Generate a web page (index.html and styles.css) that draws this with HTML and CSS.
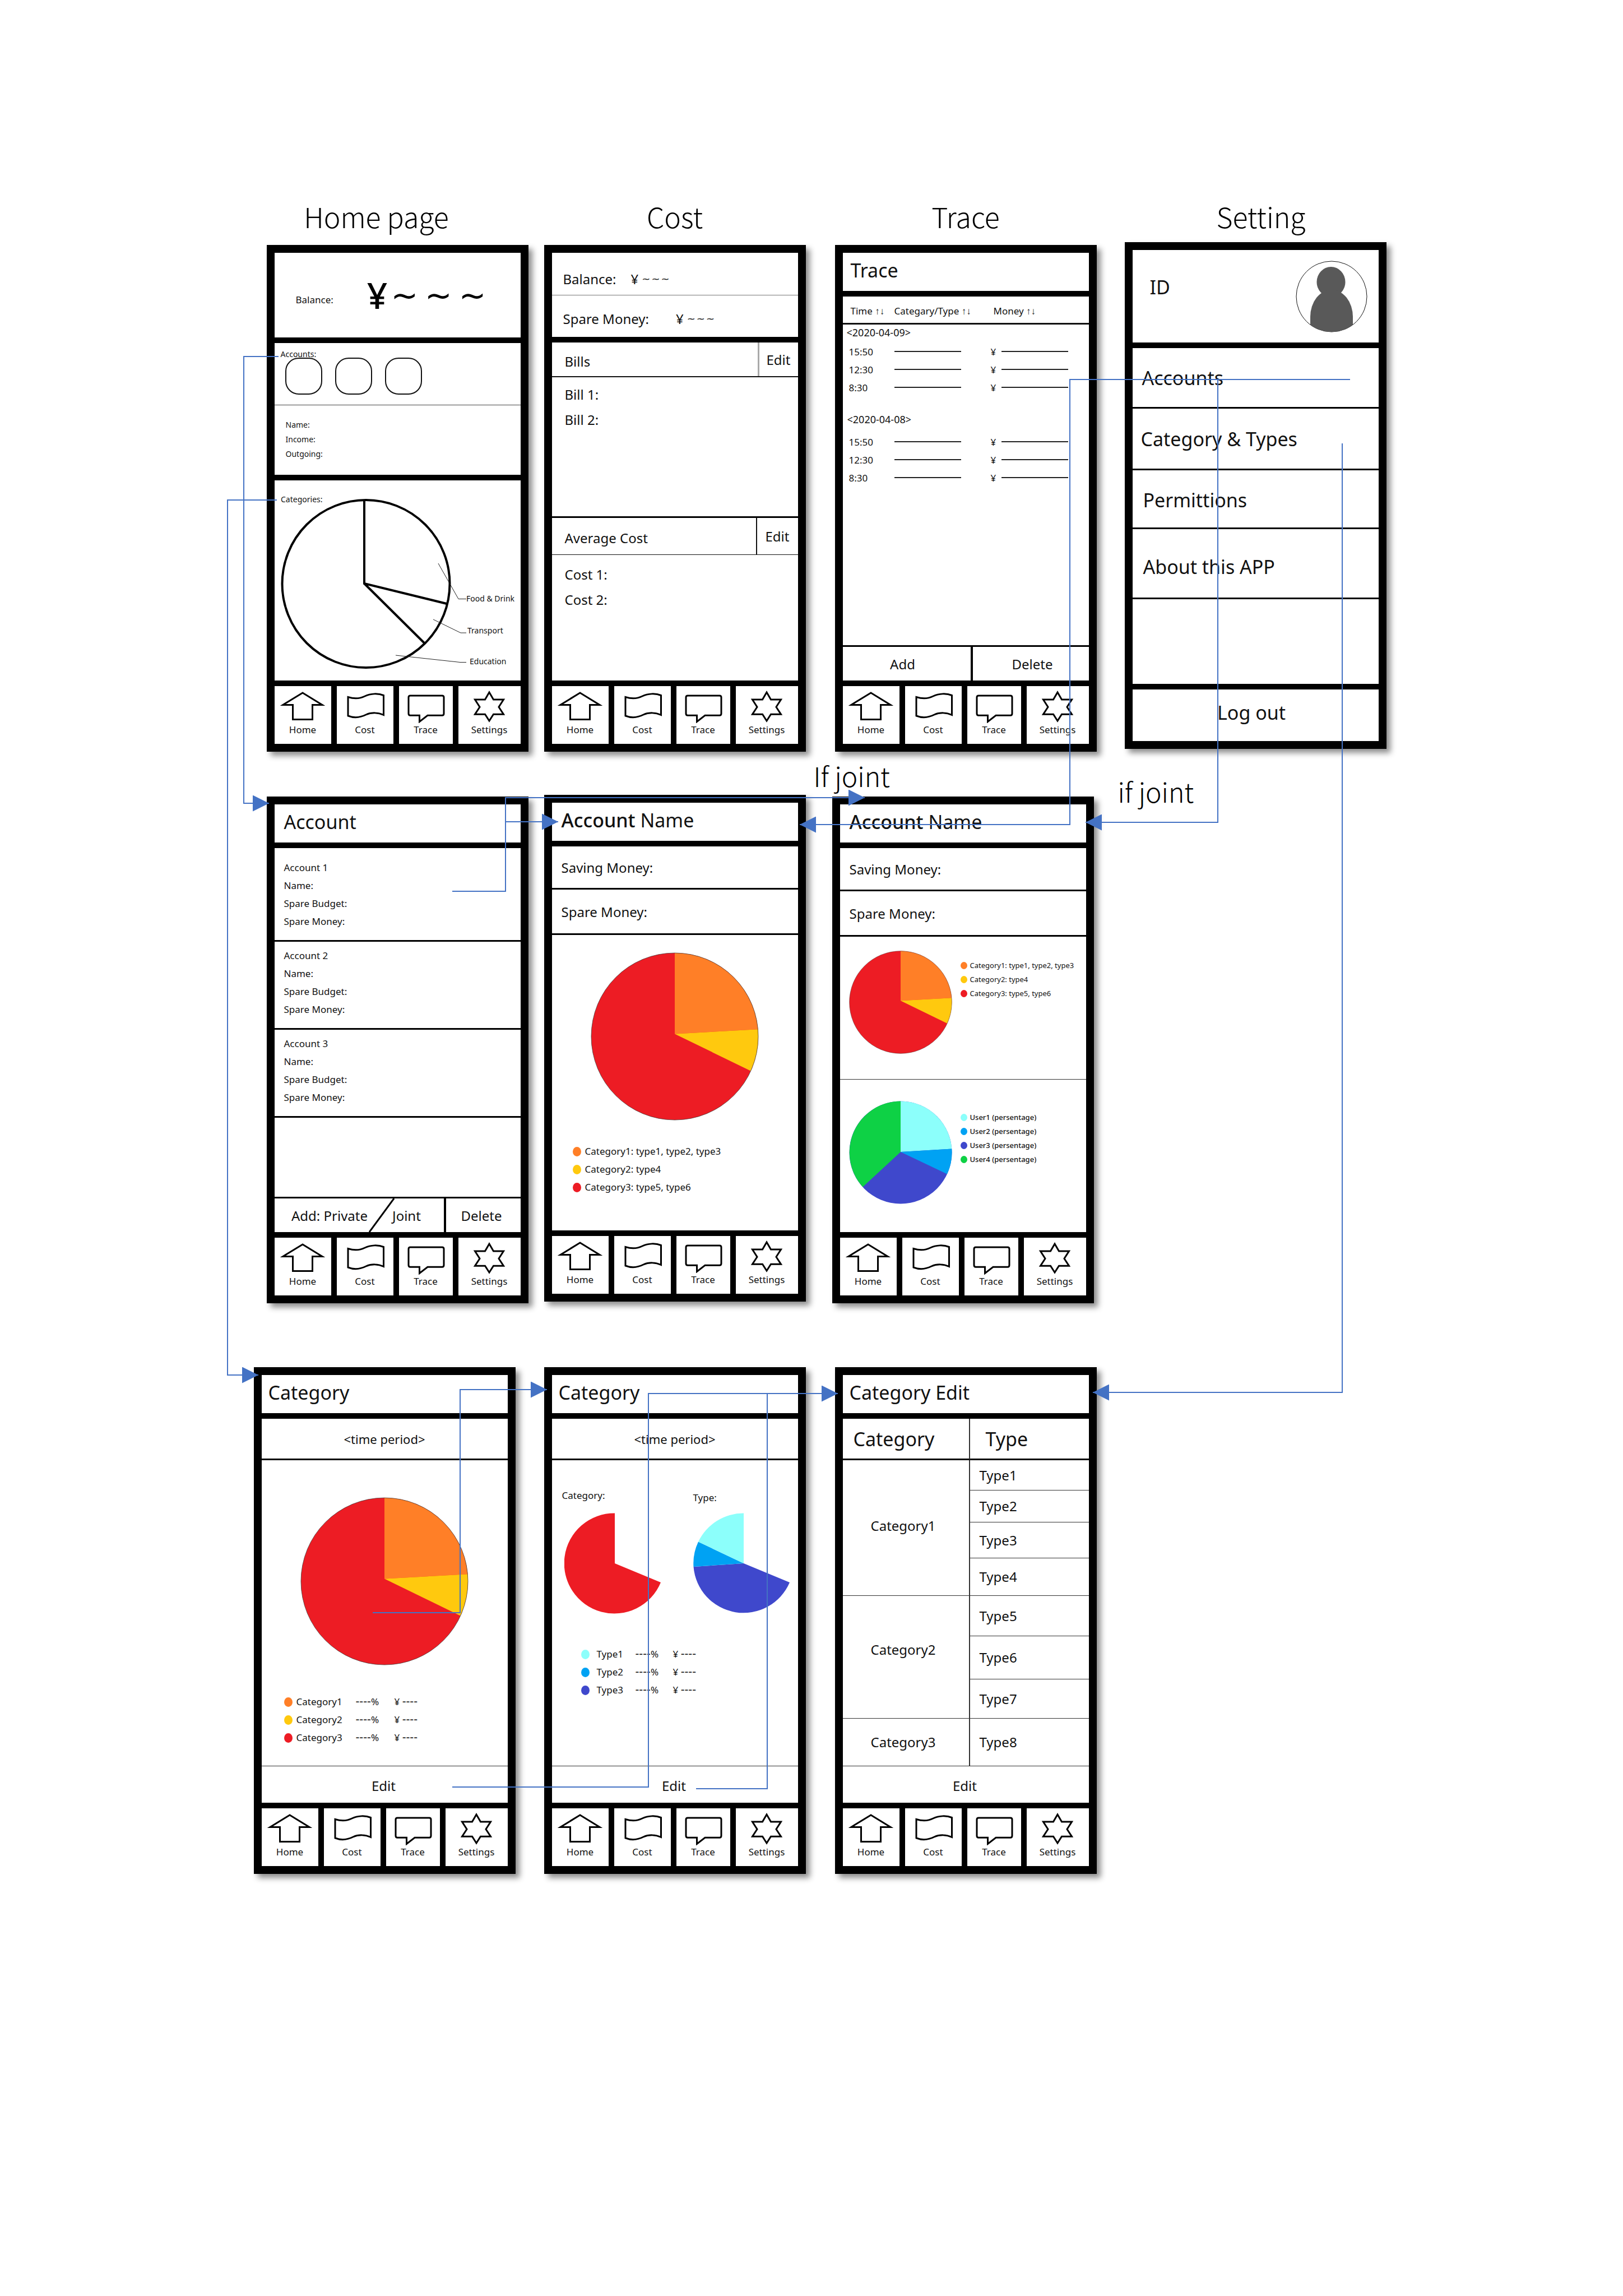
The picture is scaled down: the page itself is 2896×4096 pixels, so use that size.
FILE: index.html
```html
<!DOCTYPE html>
<html lang="en">
<head>
<meta charset="utf-8">
<meta name="viewport" content="width=device-width, initial-scale=1">
<title>Accounting app screen flow</title>
<link rel="stylesheet" href="styles.css">
</head>
<body>
<svg class="defs" width="0" height="0" aria-hidden="true">
  <symbol id="i-home" viewBox="0 0 96 66"><path d="M48 12 83 33.4H65.5V59.5H30.5V33.4H13Z"/></symbol>
  <symbol id="i-cost" viewBox="0 0 96 66"><path d="M18 19.5C26 22 38 23 48 18C58 13 72 12.500 81.500 16.500V51.500C72 47 60 46.500 50 51C38 57 27 56.500 18 53Z"/></symbol>
  <symbol id="i-trace" viewBox="0 0 96 66"><path d="M20 17H77Q80 17 80 20V49Q80 52.300 77 52.300H51L36.500 63.500V52.300H20Q17 52.300 17 49V20Q17 17 20 17Z"/></symbol>
  <symbol id="i-settings" viewBox="0 0 96 66"><path d="M48 11 55.500 24H73.500L65 37.200 73.500 50.300H55.500L48 62 40.500 50.300H22.500L31 37.200 22.500 24H40.500Z"/></symbol>
  <symbol id="category-pie" viewBox="-150 -150 300 300">
    <circle r="149" fill="#ed1c24"/>
    <path fill="#ff7f27" d="M0-4.500V-149A149 149 0 0 1 148.500-12.800Z"/>
    <path fill="#ffc90e" d="M0-4.500 148.500-12.800A149 149 0 0 1 135.500 61.500Z"/>
    <circle r="149" fill="none" stroke="#333" stroke-opacity=".7"/>
  </symbol>
</svg>

<main class="board">

  <div class="row row-top">
    <section class="column">
      <h2 class="heading heading-home">Home page</h2>
      <article class="phone">
        <div class="balance">
          <span class="balance-label">Balance:</span>
          <span class="balance-sign">¥</span>
          <span class="tildes tildes-large"><span>~</span><span>~</span><span>~</span></span>
        </div>
        <div class="home-accounts">
          <div class="tiny">Accounts:</div>
          <div class="account-tiles">
            <button type="button" class="tile" aria-label="Account 1"></button>
            <button type="button" class="tile" aria-label="Account 2"></button>
            <button type="button" class="tile" aria-label="Account 3"></button>
          </div>
        </div>
        <div class="home-details">
          <div>Name:</div>
          <div>Income:</div>
          <div>Outgoing:</div>
        </div>
        <div class="fill">
          <svg class="home-chart" viewBox="489 857 439 357">
            <g fill="none" stroke="#000" stroke-width="4">
              <circle cx="652" cy="1041.500" r="149.500"/>
              <path d="M649 892V1041L796 1077M649 1041 756 1147"/>
            </g>
            <path fill="none" stroke="#222" d="M781 1005 817 1068.500H831M772 1105 821 1129H831M705 1169 820 1181.500H831"/>
            <text x="500" y="896">Categories:</text>
            <text x="831" y="1073">Food &amp; Drink</text>
            <text x="833" y="1130">Transport</text>
            <text x="837" y="1185">Education</text>
          </svg>
        </div>
        <nav class="tabs">
          <a href="#home"><svg><use href="#i-home"/></svg>Home</a>
          <a href="#cost"><svg><use href="#i-cost"/></svg>Cost</a>
          <a href="#trace"><svg><use href="#i-trace"/></svg>Trace</a>
          <a href="#settings"><svg><use href="#i-settings"/></svg>Settings</a>
        </nav>
      </article>
    </section>

    <section class="column">
      <h2 class="heading">Cost</h2>
      <article class="phone">
        <div class="money-row money-row-first">Balance:<span class="amount amount-near">¥<span class="tildes"><span>~</span><span>~</span><span>~</span></span></span></div>
        <div class="money-row money-row-second">Spare Money:<span class="amount amount-far">¥<span class="tildes"><span>~</span><span>~</span><span>~</span></span></span></div>
        <div class="list-head bills-head"><h3>Bills</h3><button type="button">Edit</button></div>
        <div class="list bills"><div>Bill 1:</div><div>Bill 2:</div></div>
        <div class="list-head costs-head"><h3>Average Cost</h3><button type="button">Edit</button></div>
        <div class="list costs fill"><div>Cost 1:</div><div>Cost 2:</div></div>
        <nav class="tabs">
          <a href="#home"><svg><use href="#i-home"/></svg>Home</a>
          <a href="#cost"><svg><use href="#i-cost"/></svg>Cost</a>
          <a href="#trace"><svg><use href="#i-trace"/></svg>Trace</a>
          <a href="#settings"><svg><use href="#i-settings"/></svg>Settings</a>
        </nav>
      </article>
    </section>

    <section class="column">
      <h2 class="heading">Trace</h2>
      <article class="phone">
        <h3 class="titlebar">Trace</h3>
        <div class="fill">
          <table class="trace">
            <thead>
              <tr><th class="c-time">Time <span class="sort">↑↓</span></th><th class="c-type">Categary/Type <span class="sort">↑↓</span></th><th class="c-money">Money <span class="sort">↑↓</span></th></tr>
            </thead>
            <tbody>
              <tr><th colspan="3" class="date">&lt;2020-04-09&gt;</th></tr>
              <tr><td>15:50</td><td><i class="blank"></i></td><td>¥<i class="blank"></i></td></tr>
              <tr><td>12:30</td><td><i class="blank"></i></td><td>¥<i class="blank"></i></td></tr>
              <tr><td>8:30</td><td><i class="blank"></i></td><td>¥<i class="blank"></i></td></tr>
            </tbody>
            <tbody>
              <tr><th colspan="3" class="date date-later">&lt;2020-04-08&gt;</th></tr>
              <tr><td>15:50</td><td><i class="blank"></i></td><td>¥<i class="blank"></i></td></tr>
              <tr><td>12:30</td><td><i class="blank"></i></td><td>¥<i class="blank"></i></td></tr>
              <tr><td>8:30</td><td><i class="blank"></i></td><td>¥<i class="blank"></i></td></tr>
            </tbody>
          </table>
        </div>
        <div class="actions trace-actions"><button type="button">Add</button><button type="button">Delete</button></div>
        <nav class="tabs">
          <a href="#home"><svg><use href="#i-home"/></svg>Home</a>
          <a href="#cost"><svg><use href="#i-cost"/></svg>Cost</a>
          <a href="#trace"><svg><use href="#i-trace"/></svg>Trace</a>
          <a href="#settings"><svg><use href="#i-settings"/></svg>Settings</a>
        </nav>
      </article>
    </section>

    <section class="column">
      <h2 class="heading heading-setting">Setting</h2>
      <article class="phone">
        <div class="profile">
          <span>ID</span>
          <svg class="avatar" viewBox="0 0 128 128" aria-hidden="true">
            <clipPath id="avatar-clip"><circle cx="64" cy="64" r="63"/></clipPath>
            <circle cx="64" cy="64" r="63" fill="#fff" stroke="#111"/>
            <g fill="#595959" clip-path="url(#avatar-clip)"><ellipse cx="63" cy="38" rx="25.500" ry="27"/><path d="M26 128V100A38 48 0 0 1 102 100V128Z"/></g>
          </svg>
        </div>
        <a class="setting setting-accounts" href="#accounts">Accounts</a>
        <a class="setting setting-category" href="#category">Category &amp; Types</a>
        <a class="setting setting-permissions" href="#permissions">Permittions</a>
        <a class="setting setting-about" href="#about">About this APP</a>
        <div class="fill"></div>
        <button type="button" class="logout">Log out</button>
      </article>
    </section>
  </div>

  <div class="row row-middle">
    <article class="phone phone-lower" id="accounts">
      <h3 class="titlebar titlebar-account">Account</h3>
      <div class="account account-first"><div>Account 1</div><div>Name:</div><div>Spare Budget:</div><div>Spare Money:</div></div>
      <div class="account"><div>Account 2</div><div>Name:</div><div>Spare Budget:</div><div>Spare Money:</div></div>
      <div class="account"><div>Account 3</div><div>Name:</div><div>Spare Budget:</div><div>Spare Money:</div></div>
      <div class="fill"></div>
      <div class="actions account-actions">
        <button type="button" class="add-private">Add: Private</button>
        <button type="button" class="add-joint">Joint</button>
        <button type="button" class="remove">Delete</button>
        <svg class="slash" viewBox="0 0 46 60" aria-hidden="true"><path d="M1 60 45 0" stroke="#000" stroke-width="3"/></svg>
      </div>
      <nav class="tabs">
        <a href="#home"><svg><use href="#i-home"/></svg>Home</a>
        <a href="#cost"><svg><use href="#i-cost"/></svg>Cost</a>
        <a href="#trace"><svg><use href="#i-trace"/></svg>Trace</a>
        <a href="#settings"><svg><use href="#i-settings"/></svg>Settings</a>
      </nav>
    </article>

    <article class="phone">
      <h3 class="titlebar titlebar-account"><strong>Account</strong>&nbsp;Name</h3>
      <div class="sum saving">Saving Money:</div>
      <div class="sum spare">Spare Money:</div>
      <div class="fill overview">
        <svg class="pie-large"><use href="#category-pie"/></svg>
        <ul class="legend">
          <li><i class="dot orange"></i>Category1: type1, type2, type3</li>
          <li><i class="dot yellow"></i>Category2: type4</li>
          <li><i class="dot red"></i>Category3: type5, type6</li>
        </ul>
      </div>
      <nav class="tabs">
        <a href="#home"><svg><use href="#i-home"/></svg>Home</a>
        <a href="#cost"><svg><use href="#i-cost"/></svg>Cost</a>
        <a href="#trace"><svg><use href="#i-trace"/></svg>Trace</a>
        <a href="#settings"><svg><use href="#i-settings"/></svg>Settings</a>
      </nav>
    </article>

    <article class="phone phone-lower">
      <h3 class="titlebar titlebar-account"><strong>Account</strong>&nbsp;Name</h3>
      <div class="sum saving">Saving Money:</div>
      <div class="sum spare">Spare Money:</div>
      <div class="split split-categories">
        <svg class="pie-small"><use href="#category-pie"/></svg>
        <ul class="legend legend-small">
          <li><i class="dot orange"></i>Category1: type1, type2, type3</li>
          <li><i class="dot yellow"></i>Category2: type4</li>
          <li><i class="dot red"></i>Category3: type5, type6</li>
        </ul>
      </div>
      <div class="split split-users fill">
        <svg class="pie-small" viewBox="-92 -92 184 184">
          <circle r="91.500" fill="#3f48cc"/>
          <path fill="#8cfffb" d="M0-1V-91.500A91.500 91.500 0 0 1 91.300-6.500Z"/>
          <path fill="#00a2f3" d="M0-1 91.300-6.500A91.500 91.500 0 0 1 83 38.500Z"/>
          <path fill="#0ed145" d="M0-1-67.500 61.500A91.500 91.500 0 0 1 0-91.500Z"/>
        </svg>
        <ul class="legend legend-small">
          <li><i class="dot cyan"></i>User1 (persentage)</li>
          <li><i class="dot blue"></i>User2 (persentage)</li>
          <li><i class="dot indigo"></i>User3 (persentage)</li>
          <li><i class="dot green"></i>User4 (persentage)</li>
        </ul>
      </div>
      <nav class="tabs">
        <a href="#home"><svg><use href="#i-home"/></svg>Home</a>
        <a href="#cost"><svg><use href="#i-cost"/></svg>Cost</a>
        <a href="#trace"><svg><use href="#i-trace"/></svg>Trace</a>
        <a href="#settings"><svg><use href="#i-settings"/></svg>Settings</a>
      </nav>
    </article>
  </div>

  <div class="row row-bottom">
    <article class="phone" id="category">
      <h3 class="titlebar titlebar-category">Category</h3>
      <div class="period">&lt;time period&gt;</div>
      <div class="fill category-overview">
        <svg class="pie-large"><use href="#category-pie"/></svg>
        <ul class="legend shares">
          <li><i class="dot orange"></i><span>Category1</span><span><b class="dashes">----</b>%</span><span>¥ <b class="dashes">----</b></span></li>
          <li><i class="dot yellow"></i><span>Category2</span><span><b class="dashes">----</b>%</span><span>¥ <b class="dashes">----</b></span></li>
          <li><i class="dot red"></i><span>Category3</span><span><b class="dashes">----</b>%</span><span>¥ <b class="dashes">----</b></span></li>
        </ul>
      </div>
      <button type="button" class="edit">Edit</button>
      <nav class="tabs">
        <a href="#home"><svg><use href="#i-home"/></svg>Home</a>
        <a href="#cost"><svg><use href="#i-cost"/></svg>Cost</a>
        <a href="#trace"><svg><use href="#i-trace"/></svg>Trace</a>
        <a href="#settings"><svg><use href="#i-settings"/></svg>Settings</a>
      </nav>
    </article>

    <article class="phone">
      <h3 class="titlebar titlebar-category">Category</h3>
      <div class="period">&lt;time period&gt;</div>
      <div class="fill type-overview">
        <div class="pair">
          <div class="chart">
            <div class="chart-label">Category:</div>
            <svg class="pie-part" viewBox="-90 -90 180 180"><path fill="#ed1c24" d="M0 0V-89.500A89.500 89.500 0 1 0 82 34Z"/></svg>
          </div>
          <div class="chart">
            <div class="chart-label chart-label-low">Type:</div>
            <svg class="pie-part" viewBox="-90 -90 180 180">
              <path fill="#3f48cc" d="M0 0-89.500 6A89.500 89.500 0 0 0 82 34Z"/>
              <path fill="#00a2f3" d="M0 0-81-38.500A89.500 89.500 0 0 0-89.500 6Z"/>
              <path fill="#8cfffb" d="M0 0V-89.500A89.500 89.500 0 0 0-81-38.500Z"/>
            </svg>
          </div>
        </div>
        <ul class="legend shares shares-types">
          <li><i class="dot cyan"></i><span>Type1</span><span><b class="dashes">----</b>%</span><span>¥ <b class="dashes">----</b></span></li>
          <li><i class="dot blue"></i><span>Type2</span><span><b class="dashes">----</b>%</span><span>¥ <b class="dashes">----</b></span></li>
          <li><i class="dot indigo"></i><span>Type3</span><span><b class="dashes">----</b>%</span><span>¥ <b class="dashes">----</b></span></li>
        </ul>
      </div>
      <button type="button" class="edit">Edit</button>
      <nav class="tabs">
        <a href="#home"><svg><use href="#i-home"/></svg>Home</a>
        <a href="#cost"><svg><use href="#i-cost"/></svg>Cost</a>
        <a href="#trace"><svg><use href="#i-trace"/></svg>Trace</a>
        <a href="#settings"><svg><use href="#i-settings"/></svg>Settings</a>
      </nav>
    </article>

    <article class="phone">
      <h3 class="titlebar titlebar-category">Category Edit</h3>
      <table class="types fill">
        <thead><tr><th>Category</th><th>Type</th></tr></thead>
        <tbody>
          <tr class="h54"><td rowspan="4" class="group group-one">Category1</td><td>Type1</td></tr>
          <tr class="h57"><td>Type2</td></tr>
          <tr class="h64"><td>Type3</td></tr>
          <tr class="h67"><td>Type4</td></tr>
          <tr class="h72"><td rowspan="3" class="group group-two">Category2</td><td>Type5</td></tr>
          <tr class="h77"><td>Type6</td></tr>
          <tr class="h70"><td>Type7</td></tr>
          <tr class="h84"><td class="group">Category3</td><td>Type8</td></tr>
        </tbody>
      </table>
      <button type="button" class="edit">Edit</button>
      <nav class="tabs">
        <a href="#home"><svg><use href="#i-home"/></svg>Home</a>
        <a href="#cost"><svg><use href="#i-cost"/></svg>Cost</a>
        <a href="#trace"><svg><use href="#i-trace"/></svg>Trace</a>
        <a href="#settings"><svg><use href="#i-settings"/></svg>Settings</a>
      </nav>
    </article>
  </div>

  <!-- links between the screens -->
  <svg class="links" viewBox="405 349 2086 2994" aria-hidden="true">
    <defs>
      <marker id="arrow" markerUnits="userSpaceOnUse" markerWidth="29" markerHeight="29" refX="29" refY="14.500" orient="auto"><path d="M0 0 29 14.500 0 29Z" fill="#4472c4" stroke="none"/></marker>
    </defs>
    <path marker-end="url(#arrow)" d="M496 636H434V1433H479"/>
    <path marker-end="url(#arrow)" d="M493 892H405V2453H460"/>
    <path marker-end="url(#arrow)" d="M806 1590H901V1466H995"/>
    <path marker-end="url(#arrow)" d="M901 1466V1423H1542"/>
    <path marker-end="url(#arrow)" d="M2408 677H1908V1471H1426"/>
    <path marker-end="url(#arrow)" d="M2172 677V1467H1936"/>
    <path marker-end="url(#arrow)" d="M2394 791V2484H1949"/>
    <path marker-end="url(#arrow)" d="M664 2877H820V2479H975"/>
    <path marker-end="url(#arrow)" d="M806 3188H1156V2486H1494"/>
    <path d="M1241 3191H1368V2486"/>
  </svg>
  <p class="note note-left">If joint</p>
  <p class="note note-right">if joint</p>
</main>
</body>
</html>
```
FILE: styles.css
```css
* { box-sizing: border-box; }

body {
  margin: 0;
  min-height: 100vh;
  background: #fff;
  color: #111;
  font-family: "Noto Sans", "Open Sans", "Noto Sans CJK SC", sans-serif;
  font-size: 24px;
}

h2, h3, p, ul { margin: 0; padding: 0; font-weight: 400; }
ul { list-style: none; }
a { color: inherit; text-decoration: none; }
button { margin: 0; padding: 0; border: 0; background: none; color: inherit; font: inherit; }
svg { display: block; flex: none; }
.defs { position: absolute; }

/* board */
.board {
  position: relative;
  width: fit-content;
  margin: 0 auto;
  padding: 349px 17px 300px 0;
}
.row { display: grid; align-items: start; }
.row-top { grid-template-columns: 495px 519px 517px 467px; padding-left: 70px; }
.row-middle { grid-template-columns: 495px 514px 467px; padding-left: 70px; margin-top: 77px; }
.row-bottom { grid-template-columns: 518px 519px 467px; padding-left: 47px; margin-top: 114px; }
.column { width: 467px; }

.heading {
  margin-bottom: 16px;
  font: 300 50px/72px "Noto Sans CJK SC", "Noto Sans", sans-serif;
  color: #000;
  text-align: center;
}
.heading-home { padding-right: 75px; }
.heading-setting { padding-left: 20px; margin-bottom: 11px; }

/* phone frame */
.phone {
  display: flex;
  flex-direction: column;
  width: 467px;
  min-height: 904px;
  border: 14px solid #000;
  background: #fff;
  box-shadow: 7px 7px 10px rgba(0, 0, 0, .45);
}
.phone-lower { margin-top: 3px; }
.fill { flex: 1; }

.tabs {
  display: grid;
  grid-template-columns: 101px 101px 96px 1fr;
  gap: 10px;
  border-top: 10px solid #000;
  background: #000;
}
.tabs a {
  display: flex;
  flex-direction: column;
  align-items: center;
  height: 103px;
  background: #fff;
  font-size: 17px;
  line-height: 24px;
}
.tabs svg { width: 96px; height: 66px; fill: none; stroke: #000; stroke-width: 3; }

.titlebar {
  display: flex;
  align-items: center;
  height: 78px;
  padding: 0 14px 6px;
  border-bottom: 10px solid #000;
  font-size: 34px;
}
.titlebar-account { padding-left: 17px; }
.titlebar-category { padding-left: 12px; }
.titlebar strong { font-weight: 500; }

/* home */
.balance { display: flex; align-items: center; height: 161px; padding-left: 38px; border-bottom: 10px solid #000; }
.balance-label { padding-top: 16px; font-size: 17px; }
.balance-sign { margin-left: 60px; font-size: 64px; font-weight: 500; line-height: 90px; color: #000; }
.tildes { display: inline-flex; gap: 2px; margin-left: 6px; font-family: "DejaVu Sans", sans-serif; font-size: 18px; }
.tildes-large { gap: 12px; font-size: 58px; color: #000; }

.home-accounts { height: 111px; padding: 12px 11px 0; border-bottom: 1px solid #444; }
.tiny { font-size: 14px; line-height: 16px; }
.account-tiles { display: flex; gap: 23px; margin-top: -2px; padding-left: 8px; }
.tile { width: 66px; height: 66px; border: 2px solid #111; border-radius: 24px; }
.home-details { height: 134px; padding: 22px 20px 0; border-bottom: 10px solid #000; font-size: 14px; line-height: 26px; }
.home-chart { width: 100%; font-size: 14px; fill: #111; }

/* cost */
.money-row { display: flex; align-items: center; padding-left: 20px; }
.money-row-first { height: 76px; padding-top: 17px; border-bottom: 1px solid #777; }
.money-row-second { height: 84px; padding-top: 8px; border-bottom: 10px solid #000; }
.amount { display: flex; align-items: center; }
.amount-near { margin-left: 26px; }
.amount-far { margin-left: 48px; }

.list-head { display: flex; align-items: stretch; justify-content: space-between; padding-left: 23px; }
.list-head h3 { display: flex; align-items: center; padding-top: 6px; font-size: 24px; }
.bills-head { height: 62px; border-bottom: 2px solid #111; }
.bills-head button { width: 72px; border-left: 3px solid #aaa; }
.costs-head { height: 66px; border-bottom: 1px solid #111; }
.costs-head button { width: 75px; border-left: 2px solid #111; }
.list { padding-left: 23px; line-height: 45px; }
.bills { height: 251px; padding-top: 8px; border-bottom: 3px solid #000; }
.costs { padding-top: 12px; }

/* trace */
.trace { width: 100%; table-layout: fixed; border-collapse: separate; border-spacing: 0; font-size: 17px; line-height: 32px; }
.trace th { padding: 0; font-weight: 400; text-align: left; white-space: nowrap; }
.trace thead th { height: 50px; padding-top: 6px; border-bottom: 3px solid #111; }
.trace thead .c-time { width: 92px; padding-left: 14px; }
.trace thead .c-type { width: 172px; }
.trace thead .c-money { padding-left: 5px; }
.sort { font-family: "Liberation Sans", sans-serif; }
.trace .date { padding: 0 0 4px 7px; font-size: 18px; line-height: 29px; }
.trace .date-later { padding: 26px 0 10px 8px; }
.trace td { height: 32px; padding: 0; }
.trace td:first-child { padding-left: 11px; }
.blank { display: inline-block; width: 119px; height: 2px; background: #222; vertical-align: 6px; }
.trace td:last-child .blank { margin-left: 10px; }

.actions { display: flex; height: 63px; border-top: 3px solid #000; }
.trace-actions button { width: 211px; border-left: 4px solid #000; }
.trace-actions button:first-child { flex: 1; padding-right: 14px; border-left: 0; }
.trace-actions button:last-child { padding-left: 6px; }

/* settings */
.profile { display: flex; align-items: center; justify-content: space-between; height: 175px; padding: 0 20px 0 31px; border-bottom: 10px solid #000; font-size: 34px; }
.profile span { padding-bottom: 34px; }
.avatar { width: 128px; height: 128px; }
.setting { display: flex; align-items: center; padding-left: 17px; border-bottom: 3px solid #000; font-size: 34px; }
.setting-accounts { height: 108px; }
.setting-category { height: 110px; padding-left: 15px; }
.setting-permissions { height: 105px; padding: 4px 0 0 19px; }
.setting-about { height: 125px; padding: 12px 0 0 19px; }
.logout { height: 102px; padding: 0 14px 10px 0; border-top: 10px solid #000; font-size: 34px; }

/* accounts */
.account { height: 157px; padding: 9px 17px 0; border-bottom: 3px solid #000; font-size: 17px; line-height: 32px; }
.account-first { height: 167px; padding-top: 19px; }
.account-actions { position: relative; }
.add-private { width: 190px; padding-left: 7px; }
.add-joint { width: 112px; padding-right: 20px; }
.remove { flex: 1; padding-right: 6px; border-left: 4px solid #000; }
.slash { position: absolute; left: 168px; top: 0; width: 46px; height: 60px; }

/* account details */
.sum { display: flex; align-items: center; padding-left: 17px; border-bottom: 3px solid #000; }
.saving { height: 77px; }
.spare { height: 81px; }
.overview { display: flex; flex-direction: column; padding: 31px 37px 0; }
.pie-large { width: 300px; height: 300px; align-self: center; }
.overview .pie-large { margin-bottom: 39px; }
.pie-small { width: 184px; height: 184px; }

.legend { font-size: 17px; line-height: 32px; }
.legend li { display: flex; align-items: center; }
.dot { width: 15px; height: 17px; margin-right: 7px; border-radius: 50%; }
.legend-small { font-size: 13px; line-height: 25px; white-space: nowrap; }
.legend-small .dot { width: 12px; height: 13px; margin-right: 5px; }
.orange { background: #ff7f27; }
.yellow { background: #ffc90e; }
.red { background: #ed1c24; }
.cyan { background: #8cfffb; }
.blue { background: #00a2f3; }
.indigo { background: #3f48cc; }
.green { background: #0ed145; }

.split { display: flex; align-items: flex-start; gap: 15px; padding-left: 16px; }
.split .legend { margin-top: 14px; }
.split-categories { height: 255px; padding-top: 25px; border-bottom: 1px solid #333; }
.split-users { padding-top: 38px; }
.split-users .legend { margin-top: 17px; font-weight: 500; }

/* categories */
.period { display: flex; align-items: center; justify-content: center; height: 74px; border-bottom: 3px solid #000; font-size: 22px; }
.category-overview { display: flex; flex-direction: column; padding: 66px 0 0 40px; }
.category-overview .pie-large { margin: 0 40px 49px 0; }
.shares li { display: grid; grid-template-columns: 22px 106px 69px 1fr; }
.dashes { font: 400 19px/1 "DejaVu Sans", sans-serif; }
.edit { height: 66px; padding: 3px 3px 0 0; border-top: 1px solid #333; }

.type-overview { padding: 51px 0 0 18px; }
.pair { display: grid; grid-template-columns: 230px 190px; gap: 4px; margin-bottom: 56px; }
.chart-label { height: 43px; font-size: 17px; line-height: 24px; }
.chart-label-low { padding-top: 4px; }
.pie-part { width: 180px; height: 180px; }
.chart:first-child .pie-part { margin-left: 4px; }
.shares-types { padding-left: 34px; }
.shares-types li { grid-template-columns: 28px 69px 67px 1fr; }

/* category table */
.types { width: 100%; border-collapse: separate; border-spacing: 0; }
.types th { width: 227px; height: 74px; padding: 0 19px; border-bottom: 3px solid #000; font-size: 34px; font-weight: 400; text-align: left; line-height: 40px; }
.types th + th { width: auto; padding-left: 28px; }
.types td { padding: 0 0 0 17px; border-bottom: 1px solid #333; line-height: 32px; }
.types th:first-child, .types .group { border-right: 2px solid #333; }
.types .group { padding-left: 50px; }
.types .group-one { padding-bottom: 8px; }
.types .group-two { padding-bottom: 26px; }
.types tr:last-child td { border-bottom: 0; }
.h54 { height: 54px; }
.h57 { height: 57px; }
.h64 { height: 64px; }
.h67 { height: 67px; }
.h70 { height: 70px; }
.h72 { height: 72px; }
.h77 { height: 77px; }
.h84 { height: 84px; }

/* overlay */
.links { position: absolute; left: 0; top: 349px; width: 2086px; height: 2994px; overflow: visible; fill: none; stroke: #4472c4; stroke-width: 2; pointer-events: none; }
.note { position: absolute; font: 300 48px/72px "Noto Sans CJK SC", "Noto Sans", sans-serif; color: #000; }
.note-left { left: 1046px; top: 1347px; }
.note-right { left: 1589px; top: 1375px; }
```
